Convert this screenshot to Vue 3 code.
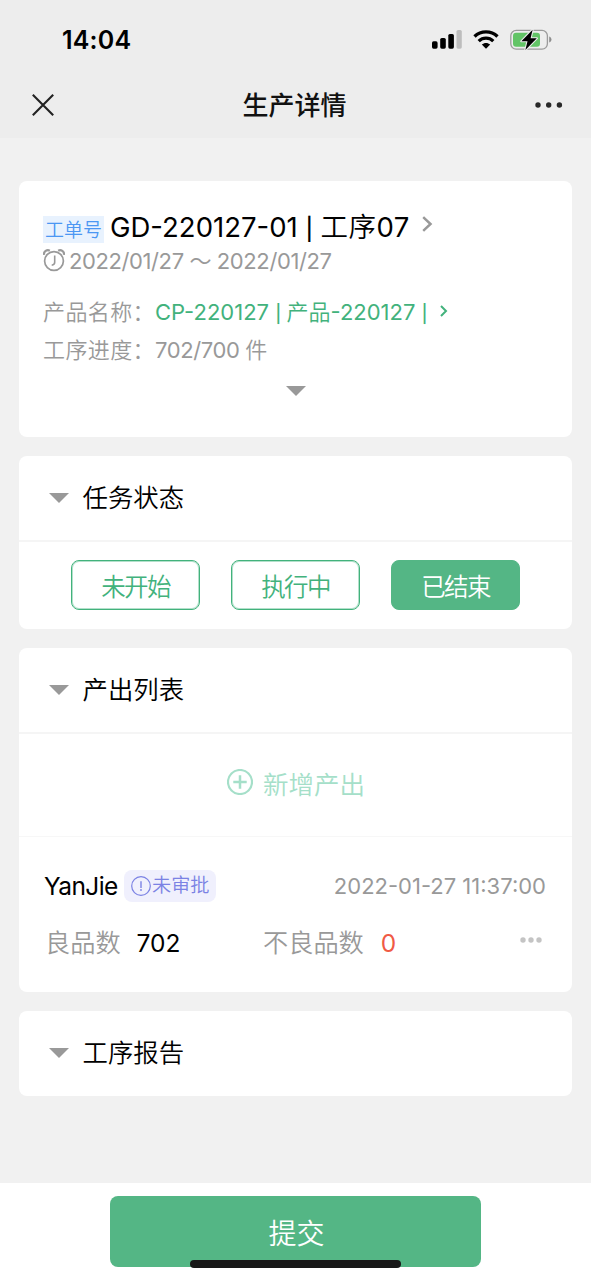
<script setup>
import { ref } from 'vue'

const statuses = ['未开始', '执行中', '已结束']
const active = ref('已结束')
</script>

<template>
  <div class="page">
    <header class="top">
      <div class="status-bar">
        <span class="clock">14:04</span>
        <div class="indicators">
          <svg class="signal" width="30" height="20" viewBox="0 0 30 20">
            <rect x="0" y="11.3" width="5.6" height="7.4" rx="1.6" fill="#000" />
            <rect x="8.2" y="8" width="5.6" height="10.7" rx="1.6" fill="#000" />
            <rect x="16.3" y="4" width="5.6" height="14.7" rx="1.6" fill="#000" />
            <rect x="24.5" y="0" width="5.3" height="18.7" rx="1.6" fill="#bdbdbd" />
          </svg>
          <svg class="wifi" width="26" height="20" viewBox="0 0 26 20">
            <path d="M1.5 6.4C8 .3 18 .3 24.5 6.4" fill="none" stroke="#000" stroke-width="3.4" />
            <path d="M5.7 11.1c4.2-3.9 10.4-3.9 14.6 0" fill="none" stroke="#000" stroke-width="3.3" />
            <path d="M8.8 14.6c2.4-2.2 6-2.2 8.4 0L13 18.8z" fill="#000" />
          </svg>
          <svg class="battery" width="42" height="22" viewBox="0 0 42 22">
            <rect x="0.8" y="1.4" width="36.6" height="18.8" rx="5.4" fill="none" stroke="#9b9b9b" stroke-width="1.3" />
            <path d="M39.2 7.4c3 1 3 5.2 0 6.2z" fill="#8e8e8e" />
            <rect x="3" y="3.8" width="27" height="14" rx="3" fill="#62c466" />
            <path d="M22.6.8 11.4 12.2h6.1L15.4 21 26.8 9.3h-6.2z" fill="#000" stroke="#ededed" stroke-width="2.2" paint-order="stroke" stroke-linejoin="round" />
          </svg>
        </div>
      </div>
      <div class="nav">
        <svg width="22" height="22" viewBox="0 0 22 22">
          <path d="M.8.8 21.2 21.2M21.2.8.8 21.2" stroke="#222" stroke-width="2.1" />
        </svg>
        <h1 class="nav-title">生产详情</h1>
        <svg width="28" height="6" viewBox="0 0 28 6">
          <circle cx="3" cy="3" r="2.7" fill="#282828" />
          <circle cx="13.7" cy="3" r="2.7" fill="#282828" />
          <circle cx="24.4" cy="3" r="2.7" fill="#282828" />
        </svg>
      </div>
    </header>

    <main class="content">
      <section class="card order">
        <div class="order-title">
          <span class="tag">工单号</span>
          <span class="order-name">GD-220127-01 <i class="bar">|</i> <span class="process"><span class="cjk">工序</span>07</span></span>
          <svg class="order-more" width="11" height="16" viewBox="0 0 11 16">
            <path d="M1.2 1.2 8.5 8l-7.3 6.8" fill="none" stroke="#999" stroke-width="2.5" />
          </svg>
        </div>
        <div class="dates">
          <svg width="22" height="23" viewBox="0 0 22 23" fill="none" stroke="#999">
            <circle cx="11" cy="12" r="9.4" stroke-width="1.7" />
            <path d="M1 5.8C.5 2.5 4 .2 6.8 1.7M21 5.8C21.5 2.5 18 .2 15.2 1.7" stroke-width="2.2" />
            <path d="M11.7 6.5v6.7c0 1.7-1 2.7-3 3" stroke-width="1.6" />
          </svg>
          <span class="range">2022/01/27 ～ 2022/01/27</span>
        </div>
        <div class="field product">
          <span class="label">产品名称：</span>
          <span class="value link">CP-220127 <i class="bar">|</i> <span class="cjk">产品</span>-220127 <i class="bar">|</i></span>
          <svg class="link-more" width="8" height="12" viewBox="0 0 8 12">
            <path d="M1 1l5 5-5 5" fill="none" stroke="#42b27c" stroke-width="2" />
          </svg>
        </div>
        <div class="field progress">
          <span class="label">工序进度：</span>
          <span class="value count">702/700 <span class="cjk">件</span></span>
        </div>
        <i class="caret expand"></i>
      </section>

      <section class="card state">
        <div class="card-head divided"><i class="caret"></i><h2>任务状态</h2></div>
        <div class="states">
          <button
            v-for="s in statuses"
            :key="s"
            class="state-btn"
            :class="{ on: s === active }"
            @click="active = s"
          >{{ s }}</button>
        </div>
      </section>

      <section class="card output">
        <div class="card-head divided"><i class="caret"></i><h2>产出列表</h2></div>
        <div class="add">
          <svg width="26" height="26" viewBox="0 0 26 26" fill="none" stroke="#a5dfc9">
            <circle cx="13" cy="13" r="12" stroke-width="2.2" />
            <path d="M6.3 13h13.4M13 6.3v13.4" stroke-width="2.5" />
          </svg>
          <span>新增产出</span>
        </div>
        <div class="record">
          <div class="record-head">
            <span class="person">YanJie</span>
            <span class="badge">
              <svg width="20" height="20" viewBox="0 0 20 20">
                <circle cx="10" cy="10" r="9.3" fill="none" stroke="#7b82e4" stroke-width="1.2" />
                <path d="M10 5.3v6.6" stroke="#7b82e4" stroke-width="1.4" />
                <circle cx="10" cy="14" r="0.9" fill="#7b82e4" />
              </svg>
              <span>未审批</span>
            </span>
            <time>2022-01-27 11:37:00</time>
          </div>
          <div class="record-body">
            <div class="good"><span>良品数</span><b>702</b></div>
            <div class="bad"><span>不良品数</span><b>0</b></div>
            <svg width="22" height="6" viewBox="0 0 22 6" fill="#c4c4c4">
              <circle cx="3" cy="3" r="2.7" />
              <circle cx="11" cy="3" r="2.7" />
              <circle cx="19" cy="3" r="2.7" />
            </svg>
          </div>
        </div>
      </section>

      <section class="card report">
        <div class="card-head"><i class="caret"></i><h2>工序报告</h2></div>
      </section>
    </main>

    <footer class="bottom">
      <button class="submit">提交</button>
      <div class="home-bar"></div>
    </footer>
  </div>
</template>

<style>
body {
  background: #f1f1f1;
}
</style>

<style scoped>
* {
  box-sizing: border-box;
}
.page {
  width: 591px;
  height: 1280px;
  display: flex;
  flex-direction: column;
  background: #f1f1f1;
  font-family: Inter, "Noto Sans CJK SC", sans-serif;
  font-weight: 350;
  color: #000;
  overflow: hidden;
  white-space: nowrap;
}
svg {
  flex: none;
  display: block;
}
h1, h2 {
  margin: 0;
}
button {
  font-family: inherit;
  padding: 0;
}
.top {
  height: 138px;
  flex: none;
  background: #ededed;
}
.status-bar {
  height: 79px;
  padding: 0 39px 0 62px;
  display: flex;
  align-items: center;
  justify-content: space-between;
}
.clock {
  font-size: 25px;
  line-height: 30px;
  font-weight: 600;
  letter-spacing: 0.2px;
}
.indicators {
  display: flex;
  align-items: center;
}
.wifi,
.battery {
  margin-left: 11px;
}
.nav {
  height: 51px;
  padding: 0 28px 0 32px;
  display: flex;
  align-items: center;
  justify-content: space-between;
}
.nav-title {
  margin-top: 3px;
  font-size: 26px;
  line-height: 40px;
  font-weight: 500;
  color: #111;
}
.content {
  flex: 1;
  padding: 42.5px 19px 0 19px;
  display: flex;
  flex-direction: column;
  gap: 19px;
}
.card {
  background: #fff;
  border-radius: 8px;
  flex: none;
}
.order {
  height: 256px;
  padding: 28.5px 24px 0;
  display: flex;
  flex-direction: column;
}
.order-title {
  height: 34px;
  display: flex;
  align-items: center;
}
.tag {
  width: 61px;
  height: 27px;
  margin-top: 7px;
  background: #e8f2fe;
  color: #4b97f3;
  font-size: 19px;
  line-height: 29px;
  text-align: center;
}
.order-name {
  margin: 2px 0 0 6px;
  font-size: 27.5px;
  line-height: 34px;
  font-weight: 400;
}
.process {
  margin-left: 1px;
  letter-spacing: 0.5px;
}
.bar {
  display: inline-block;
  width: 0.29em;
  font-size: 0.8em;
  line-height: 1;
  font-style: normal;
  font-weight: 500;
}
.order-more {
  margin: -5px 0 0 12px;
}
.dates {
  height: 30px;
  margin-top: 3px;
  display: flex;
  align-items: center;
  color: #999;
}
.dates svg {
  margin-top: -2px;
}
.range {
  margin-left: 4px;
  font-size: 22px;
  line-height: 30px;
  font-weight: 400;
  letter-spacing: -0.4px;
}
.field {
  height: 30px;
  display: flex;
  align-items: center;
  font-size: 22px;
  line-height: 30px;
  color: #999;
}
.product {
  margin-top: 21px;
}
.progress {
  margin-top: 8px;
}
.label {
  width: 112px;
  letter-spacing: 0.4px;
}
.value {
  font-weight: 400;
}
.cjk {
  font-weight: 350;
}
.link {
  color: #42b27c;
}
.count {
  letter-spacing: -0.4px;
}
.link-more {
  margin: -3px 0 0 13px;
}
.caret {
  width: 0;
  height: 0;
  border: 10px solid transparent;
  border-top-color: #999;
  border-bottom: 0;
}
.expand {
  align-self: center;
  margin-top: 21px;
}
.card-head {
  height: 85px;
  padding-left: 29.5px;
  display: flex;
  align-items: center;
}
.divided {
  height: 86.5px;
  border-bottom: 2px solid #f5f5f5;
}
.card-head h2 {
  margin-left: 14px;
  font-size: 25.4px;
  line-height: 36px;
  font-weight: 350;
}
.state {
  height: 173px;
}
.states {
  padding: 18px 0 0 51.5px;
  display: flex;
  gap: 31px;
}
.state-btn {
  width: 129px;
  height: 50px;
  border: 1px solid #42b27c;
  box-shadow: inset 0 0 0 1px rgba(66, 178, 124, 0.4);
  border-radius: 8px;
  background: #fff;
  color: #42b27c;
  font-size: 24.5px;
  font-weight: 350;
  letter-spacing: -1.7px;
  text-indent: 1px;
}
.state-btn.on {
  background: #54b685;
  border-color: #54b685;
  box-shadow: none;
  color: #fff;
}
.output {
  height: 344px;
}
.add {
  height: 103px;
  padding-left: 1px;
  border-bottom: 1px solid #f7f7f7;
  display: flex;
  align-items: center;
  justify-content: center;
  color: #a5dfc9;
  font-size: 25.5px;
}
.add svg {
  margin: -6px 10px 0 0;
}
.add span {
  margin-top: -6px;
}
.record {
  padding: 33px 26px 0 25px;
}
.record-head {
  height: 32px;
  display: flex;
  align-items: center;
}
.person {
  width: 80px;
  font-size: 24.5px;
  font-weight: 400;
  letter-spacing: -0.6px;
}
.badge {
  width: 92px;
  height: 32px;
  padding-left: 7px;
  border-radius: 8px;
  background: #f0f0fd;
  color: #7b82e4;
  display: flex;
  align-items: center;
  font-size: 19.2px;
}
.badge span {
  line-height: 28px;
  margin: -2px 0 0 1px;
}
time {
  margin-left: auto;
  color: #999;
  font-size: 22px;
  font-weight: 400;
}
.record-body {
  margin-top: 24px;
  padding-left: 1px;
  height: 34px;
  display: flex;
  align-items: center;
  font-size: 25.2px;
  line-height: 34px;
}
.record-body span {
  color: #999;
}
.record-body b {
  font-size: 24.5px;
  font-weight: 400;
  margin-left: 16px;
}
.good {
  width: 218px;
}
.bad b {
  margin-left: 17px;
  color: #f05a45;
}
.record-body svg {
  margin: -6px 4px 0 auto;
}
.report {
  height: 85px;
}
.bottom {
  position: relative;
  height: 97px;
  flex: none;
  padding-top: 13px;
  background: #fff;
}
.submit {
  display: block;
  width: 371px;
  height: 71px;
  margin: 0 auto;
  border: 0;
  border-radius: 8px;
  background: #54b685;
  color: #fff;
  font-size: 28px;
  font-weight: 350;
  text-indent: 2px;
}
.home-bar {
  position: absolute;
  left: 190px;
  bottom: 12px;
  width: 211px;
  height: 8px;
  border-radius: 4px;
  background: #181818;
}
</style>
